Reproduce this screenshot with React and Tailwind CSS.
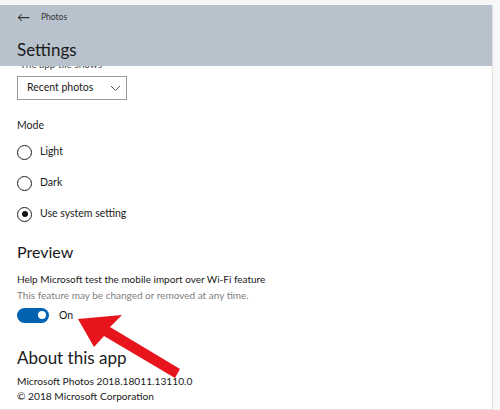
import React from "react";

function Radio({ label, checked }) {
  return (
    <div className="flex items-center gap-[8px] h-[15px]">
      <span className="w-[15px] h-[15px] rounded-full border-[1.5px] border-[#222] flex items-center justify-center">
        {checked && <span className="w-[6px] h-[6px] rounded-full bg-[#111]" />}
      </span>
      <span className="text-[10.5px] text-[#1a1a1a]">{label}</span>
    </div>
  );
}

export default function App() {
  return (
    <div
      className="relative w-[500px] h-[410px] bg-[#f7f7f7] overflow-hidden"
      style={{ fontFamily: 'Lato, "Noto Sans", sans-serif' }}
    >
      <div className="w-[493px] h-[405px] mt-[5px] bg-white border-r border-b border-[#e2e2e2] flex flex-col">
        {/* header band */}
        <div className="h-[61px] bg-[#b8c2cc] px-[17px] pt-[5px] shrink-0">
          <div className="flex items-center gap-[11px] h-[14px] text-[#333]">
            <span className="text-[13px] leading-none">←</span>
            <span className="text-[8.5px]">Photos</span>
          </div>
          <div className="mt-[17px] text-[17px] leading-none text-[#1a1a1a]">Settings</div>
        </div>

        {/* cut-off label under header */}
        <div className="h-[5px] overflow-hidden px-[20px]">
          <div className="text-[10px] leading-[14px] text-[#444] -mt-[9px]">The app tile shows</div>
        </div>

        <div className="px-[17px]">
          <div className="mt-[5px] w-[110px] h-[24px] border border-[#9a9a9a] flex items-center justify-between pl-[9px] pr-[5px]">
            <span className="text-[10.5px] text-[#1a1a1a]">Recent photos</span>
            <svg width="11" height="7" viewBox="0 0 11 7" fill="none">
              <path d="M1 1l4.5 4.5L10 1" stroke="#555" strokeWidth="1" />
            </svg>
          </div>

          <div className="mt-[20px] text-[10.5px] text-[#1a1a1a] leading-none">Mode</div>
          <div className="mt-[14px] flex flex-col gap-[16px]">
            <Radio label="Light" />
            <Radio label="Dark" />
            <Radio label="Use system setting" checked />
          </div>

          <div className="mt-[22px] text-[16px] leading-none text-[#1a1a1a]">Preview</div>
          <div className="mt-[11px] text-[10px] leading-[16px] text-[#1a1a1a]">
            Help Microsoft test the mobile import over Wi-Fi feature
          </div>
          <div className="text-[10px] leading-[16px] text-[#808080]">
            This feature may be changed or removed at any time.
          </div>
          <div className="mt-[5px] flex items-center gap-[10px]">
            <span className="w-[32px] h-[15px] rounded-full bg-[#0063b1] flex items-center justify-end pr-[3px]">
              <span className="w-[8px] h-[8px] rounded-full bg-white" />
            </span>
            <span className="text-[10.5px] text-[#1a1a1a]">On</span>
          </div>

          <div className="mt-[26px] text-[17px] leading-none text-[#1a1a1a]">About this app</div>
          <div className="mt-[8px] text-[10.2px] leading-[15px] text-[#1a1a1a]">
            Microsoft Photos 2018.18011.13110.0
          </div>
          <div className="text-[10.2px] leading-[15px] text-[#1a1a1a]">© 2018 Microsoft Corporation</div>
        </div>
      </div>

      {/* red arrow annotation */}
      <svg className="absolute left-0 top-0" width="500" height="410" viewBox="0 0 500 410">
        <path
          d="M78 319 L122 315 L110 327 L180 369 L175 378 L104 336 L94 347 Z"
          fill="#e8141b"
        />
      </svg>
    </div>
  );
}
